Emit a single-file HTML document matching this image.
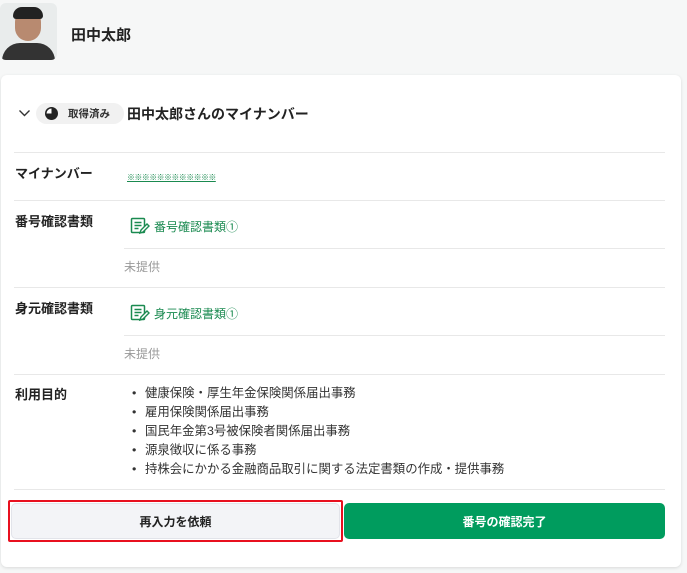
<!DOCTYPE html>
<html><head><meta charset="utf-8"><style>
*{box-sizing:border-box;margin:0;padding:0}
body{width:687px;height:573px;background:#f6f7f7;font-family:"Liberation Sans","Noto Sans CJK JP",sans-serif;color:#222;position:relative;overflow:hidden}
.a{position:absolute}
.card{left:1px;top:75px;width:680px;height:492px;background:#fff;border-radius:6px;box-shadow:0 1px 3px rgba(0,0,0,.12)}
.sep{position:absolute;height:1px;background:#e8e8e8}
.lbl{position:absolute;left:15px;font-size:13px;font-weight:bold}
.link{position:absolute;left:130px;font-size:12px;color:#1a8a50;display:flex;align-items:center;gap:4px}
.np{position:absolute;left:124px;font-size:12px;color:#999}
ul{position:absolute;left:130px;top:384px;list-style:none;font-size:12.4px;line-height:19px;color:#333}
ul li:before{content:"•";display:inline-block;width:13px;padding-left:2px}
</style></head><body>
<div class="a" style="left:0;top:3px;width:57px;height:57px;border-radius:6px;background:#e9ecec;overflow:hidden">
<div class="a" style="left:15px;top:6px;width:26px;height:32px;border-radius:13px;background:#b88a70"></div>
<div class="a" style="left:13px;top:4px;width:30px;height:12px;border-radius:12px 12px 4px 4px;background:#222"></div>
<div class="a" style="left:2px;top:40px;width:53px;height:20px;border-radius:18px 18px 0 0;background:#333"></div>
</div>
<div class="a" style="left:71px;top:24px;font-size:15px;font-weight:bold">田中太郎</div>
<div class="a card"></div>
<svg class="a" style="left:18px;top:108px" width="13" height="10" viewBox="0 0 13 10"><path d="M1.5 2.5 L6.5 7.5 L11.5 2.5" fill="none" stroke="#333" stroke-width="1.4"/></svg>
<div class="a" style="left:36px;top:103px;width:88px;height:21px;border-radius:11px;background:#f1f1f1"></div>
<svg class="a" style="left:44px;top:106px" width="15" height="15" viewBox="0 0 15 15"><circle cx="7.5" cy="7.5" r="6.5" fill="#222"/><path d="M7.5 2.5 A5 5 0 0 0 2.5 7.5 L7.5 7.5Z" fill="#fff"/></svg>
<div class="a" style="left:68px;top:106px;font-size:10.5px;font-weight:bold;color:#333">取得済み</div>
<div class="a" style="left:127px;top:104px;font-size:14px;font-weight:bold">田中太郎さんのマイナンバー</div>
<div class="sep" style="left:14px;top:152px;width:651px"></div>
<div class="lbl" style="top:163px">マイナンバー</div>
<div class="a" style="left:127px;top:172px;font-size:8px;color:#1a8a50;text-decoration:underline;letter-spacing:-0.6px">※※※※※※※※※※※※</div>
<div class="sep" style="left:14px;top:200px;width:651px"></div>
<div class="lbl" style="top:211px">番号確認書類</div>
<div class="link" style="top:217px"><svg width="20" height="18" viewBox="0 0 20 18"><rect x="1.5" y="1.5" width="13" height="14" rx="1" fill="none" stroke="#1a8a50" stroke-width="1.5"/><path d="M4.5 5.5h7M4.5 8.5h7M4.5 11.5h4" stroke="#1a8a50" stroke-width="1.5"/><path d="M10 16 L11 13 L17 7 L19 9 L13 15Z" fill="#fff" stroke="#1a8a50" stroke-width="1.4"/></svg>番号確認書類①</div>
<div class="sep" style="left:124px;top:248px;width:541px"></div>
<div class="np" style="top:258px">未提供</div>
<div class="sep" style="left:14px;top:287px;width:651px"></div>
<div class="lbl" style="top:298px">身元確認書類</div>
<div class="link" style="top:304px"><svg width="20" height="18" viewBox="0 0 20 18"><rect x="1.5" y="1.5" width="13" height="14" rx="1" fill="none" stroke="#1a8a50" stroke-width="1.5"/><path d="M4.5 5.5h7M4.5 8.5h7M4.5 11.5h4" stroke="#1a8a50" stroke-width="1.5"/><path d="M10 16 L11 13 L17 7 L19 9 L13 15Z" fill="#fff" stroke="#1a8a50" stroke-width="1.4"/></svg>身元確認書類①</div>
<div class="sep" style="left:124px;top:335px;width:541px"></div>
<div class="np" style="top:345px">未提供</div>
<div class="sep" style="left:14px;top:374px;width:651px"></div>
<div class="lbl" style="top:384px">利用目的</div>
<ul><li>健康保険・厚生年金保険関係届出事務</li><li>雇用保険関係届出事務</li><li>国民年金第3号被保険者関係届出事務</li><li>源泉徴収に係る事務</li><li>持株会にかかる金融商品取引に関する法定書類の作成・提供事務</li></ul>
<div class="sep" style="left:14px;top:489px;width:651px"></div>
<div class="a" style="left:8px;top:500px;width:335px;height:42px;border:2px solid #e8101f;border-radius:2px"></div>
<div class="a" style="left:11px;top:503px;width:329px;height:36px;background:#f3f4f7;border:1px solid #e2e4ea;border-radius:5px;font-size:12px;font-weight:bold;display:flex;align-items:center;justify-content:center">再入力を依頼</div>
<div class="a" style="left:344px;top:503px;width:321px;height:36px;background:#009c5e;border-radius:5px;font-size:12px;font-weight:bold;color:#fff;display:flex;align-items:center;justify-content:center">番号の確認完了</div>
</body></html>
